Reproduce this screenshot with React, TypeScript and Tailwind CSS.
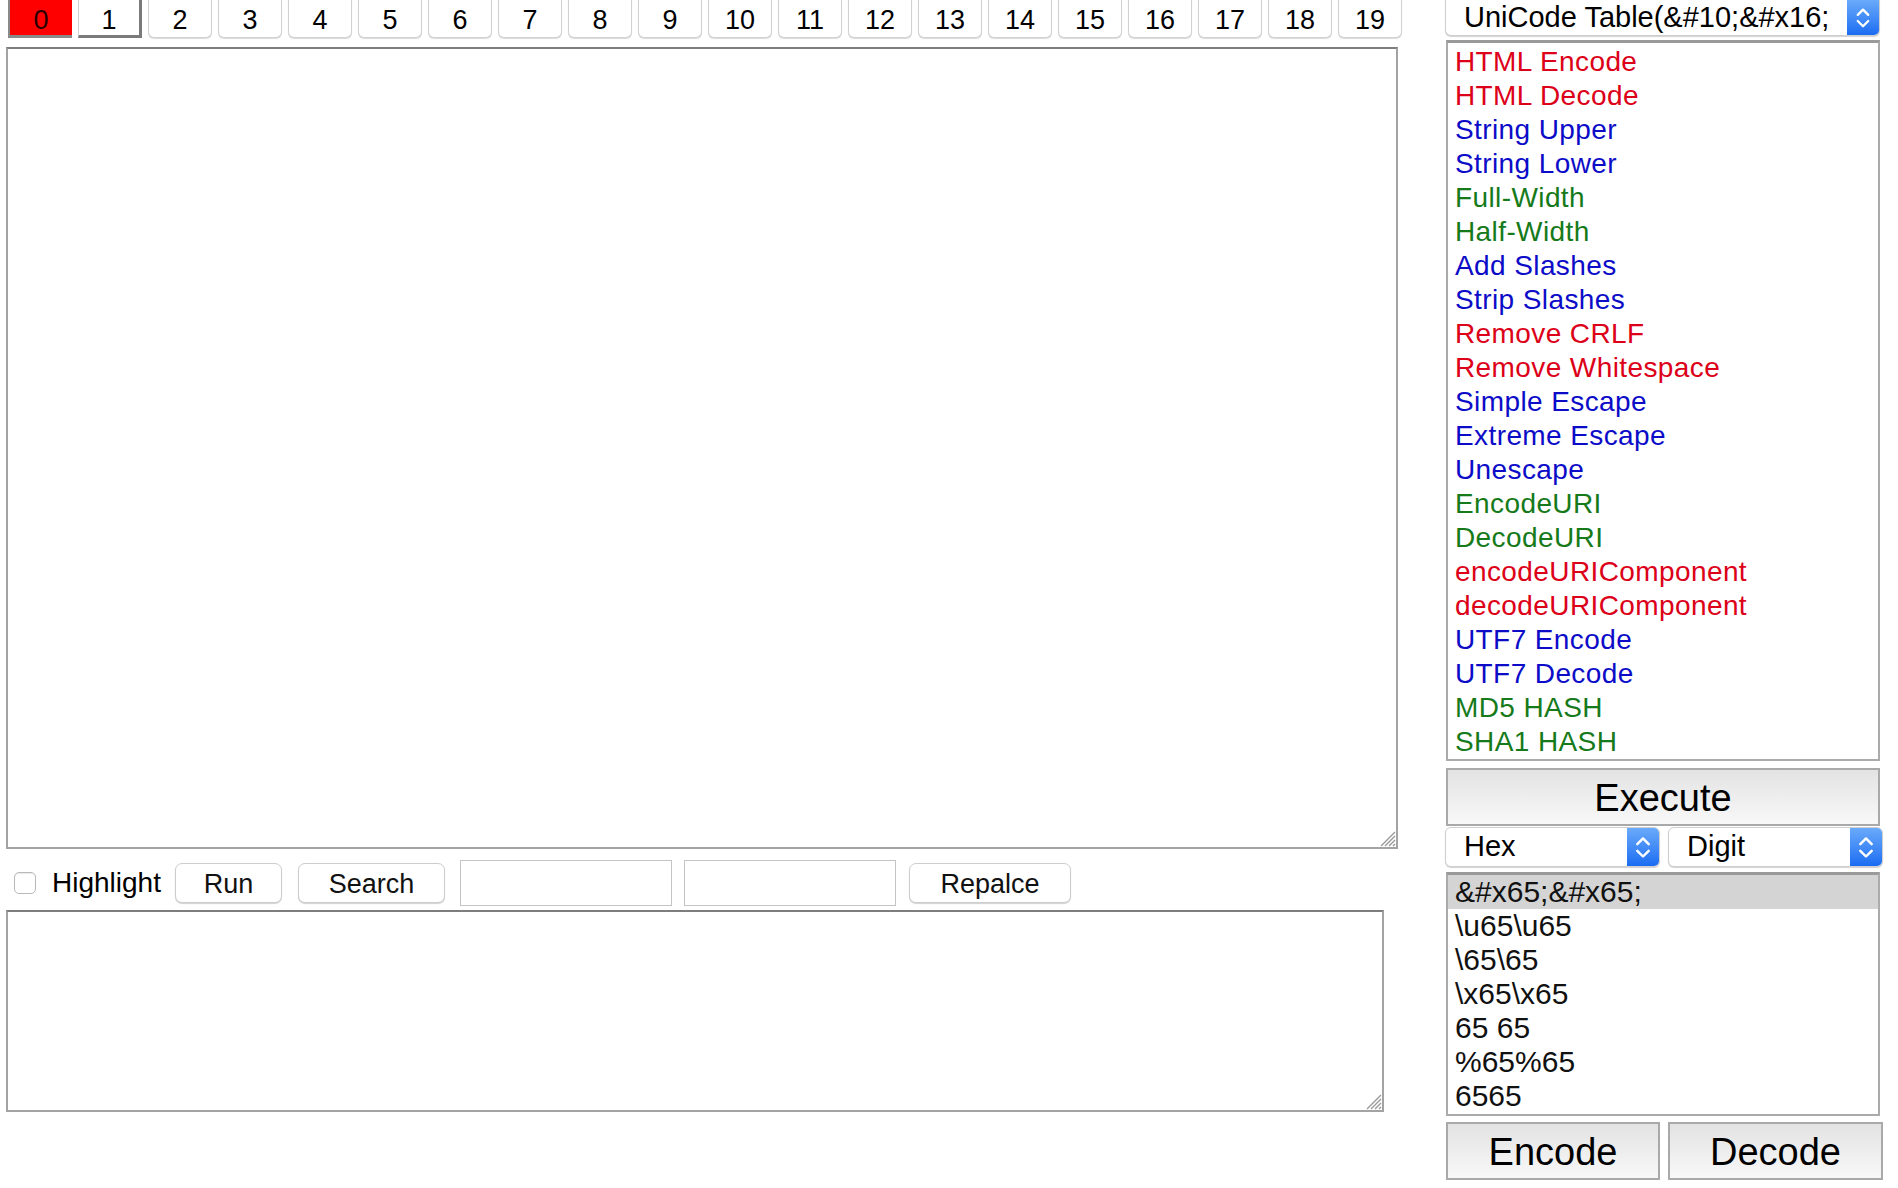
import clsx from 'clsx'

type Tone = 'red' | 'blue' | 'green'

const tabs = Array.from({ length: 20 }, (_, i) => i)

const operations: [string, Tone][] = [
  ['HTML Encode', 'red'],
  ['HTML Decode', 'red'],
  ['String Upper', 'blue'],
  ['String Lower', 'blue'],
  ['Full-Width', 'green'],
  ['Half-Width', 'green'],
  ['Add Slashes', 'blue'],
  ['Strip Slashes', 'blue'],
  ['Remove CRLF', 'red'],
  ['Remove Whitespace', 'red'],
  ['Simple Escape', 'blue'],
  ['Extreme Escape', 'blue'],
  ['Unescape', 'blue'],
  ['EncodeURI', 'green'],
  ['DecodeURI', 'green'],
  ['encodeURIComponent', 'red'],
  ['decodeURIComponent', 'red'],
  ['UTF7 Encode', 'blue'],
  ['UTF7 Decode', 'blue'],
  ['MD5 HASH', 'green'],
  ['SHA1 HASH', 'green'],
]

const toneClass: Record<Tone, string> = {
  red: 'text-[#dc0018]',
  blue: 'text-[#0c0cc8]',
  green: 'text-[#167a1a]',
}

const results = ['&#x65;&#x65;', '\\u65\\u65', '\\65\\65', '\\x65\\x65', '65 65', '%65%65', '6565']

// hatched corner that the browser draws on a resizable textarea
const Grip = () => (
  <svg className="absolute bottom-0 right-0" width="18" height="18" viewBox="0 0 18 18">
    <path d="M17 3 L3 17 M17 7 L7 17 M17 11 L11 17 M17 15 L15 17" stroke="#9a9a9a" strokeWidth="1.4" />
  </svg>
)

const Chevrons = () => (
  <svg width="32" height="40" viewBox="0 0 32 40" className="h-full">
    <path d="M10 17 L16 11 L22 17 M10 24 L16 30 L22 24" stroke="white" strokeWidth="2.6" fill="none" strokeLinecap="round" strokeLinejoin="round" />
  </svg>
)

interface SelectProps {
  label: string
  className?: string
}

const Select = ({ label, className }: SelectProps) => (
  <div className={clsx('flex overflow-hidden rounded-[6px] border border-[#cfcfcf] bg-white shadow-[0_1px_1px_rgba(0,0,0,0.18)]', className)}>
    <div className="flex flex-1 items-center overflow-hidden whitespace-nowrap pl-[18px] text-[29px]">{label}</div>
    <div className="flex w-[32px] shrink-0 items-center justify-center bg-linear-to-b from-[#6aaafa] to-[#1a6cf2]">
      <Chevrons />
    </div>
  </div>
)

const MacButton = ({ label, className }: SelectProps) => (
  <button className={clsx('h-[40px] rounded-[7px] border border-[#cdcdcd] bg-white text-[27px] text-[#111] shadow-[0_1px_1px_rgba(0,0,0,0.18)]', className)}>
    {label}
  </button>
)

const BigButton = ({ label, className }: SelectProps) => (
  <button className={clsx('h-[58px] border-2 border-[#a9a9a9] bg-linear-to-b from-[#e3e3e3] to-[#f8f8f8] text-[38px] text-black', className)}>
    {label}
  </button>
)

export default function App() {
  return (
    <div className="flex h-[1188px] w-[1898px] overflow-hidden bg-white font-['Liberation_Sans',Arial,sans-serif] text-black">
      {/* left: tabs, editors, search row */}
      <div className="flex w-[1398px] shrink-0 flex-col pl-[6px]">
        <div className="ml-[2px] flex h-[38px] gap-[6px]">
          {tabs.map(i => (
            <button
              key={i}
              className={clsx(
                'h-[38px] w-[64px] shrink-0 text-[27px]',
                i === 0 && 'border-b-[3px] border-l-2 border-[#8a8a8a] bg-[#ff0000] text-[#2a0000]',
                i === 1 && 'border-b-[3px] border-l border-r-[3px] border-[#7a7a7a] border-l-[#d0d0d0] bg-white',
                i > 1 && 'rounded-b-[6px] border border-t-0 border-[#d2d2d2] bg-white shadow-[0_1px_1px_rgba(0,0,0,0.15)]'
              )}
            >
              {i}
            </button>
          ))}
        </div>

        <div className="relative mt-[9px] h-[802px] w-[1392px] border-2 border-[#a3a3a3] border-t-[#7d7d7d]">
          <textarea className="h-full w-full resize-none outline-none" />
          <Grip />
        </div>

        <div className="mt-[11px] flex h-[46px] items-center text-[28px]">
          <span className="ml-[8px] h-[22px] w-[22px] rounded-[5px] border border-[#b9b9b9] bg-white shadow-[inset_0_1px_1px_rgba(0,0,0,0.08)]" />
          <span className="ml-[16px] w-[111px] whitespace-nowrap">Highlight</span>
          <MacButton label="Run" className="ml-[12px] w-[107px]" />
          <MacButton label="Search" className="ml-[16px] w-[147px]" />
          <input className="ml-[15px] h-[46px] w-[212px] border border-[#c4c4c4] outline-none" />
          <input className="ml-[12px] h-[46px] w-[212px] border border-[#c4c4c4] outline-none" />
          <MacButton label="Repalce" className="ml-[13px] w-[162px]" />
        </div>

        <div className="relative mt-[4px] h-[202px] w-[1378px] border-2 border-[#a3a3a3] border-t-[#7d7d7d]">
          <textarea className="h-full w-full resize-none outline-none" />
          <Grip />
        </div>
      </div>

      {/* right: operation picker and encoder */}
      <div className="ml-[47px] flex w-[438px] shrink-0 flex-col">
        <Select label={'UniCode Table(&#10;&#x16;'} className="h-[36px] w-[435px] rounded-t-none border-t-0" />

        <div className="ml-[1px] mt-[4px] h-[721px] w-[434px] border-2 border-[#ababab] border-t-[3px] border-t-[#9a9a9a] pl-[7px] pt-[2px]">
          {operations.map(([name, tone]) => (
            <div key={name} className={clsx('whitespace-nowrap text-[28px] leading-[34px] tracking-[0.4px]', toneClass[tone])}>
              {name}
            </div>
          ))}
        </div>

        <BigButton label="Execute" className="ml-[1px] mt-[7px] w-[434px]" />

        <div className="mt-[1px] flex gap-[8px]">
          <Select label="Hex" className="h-[40px] w-[215px]" />
          <Select label="Digit" className="h-[40px] w-[215px]" />
        </div>

        <div className="ml-[1px] mt-[5px] h-[244px] w-[434px] border-2 border-[#ababab] border-t-[3px] border-t-[#9a9a9a]">
          {results.map((r, idx) => (
            <div
              key={r}
              className={clsx('whitespace-nowrap pl-[7px] text-[30px] leading-[34px] text-[#111]', idx === 0 && 'bg-[#d4d4d4]')}
            >
              {r}
            </div>
          ))}
        </div>

        <div className="ml-[1px] mt-[6px] flex gap-[8px]">
          <BigButton label="Encode" className="w-[214px]" />
          <BigButton label="Decode" className="w-[215px]" />
        </div>
      </div>
    </div>
  )
}
